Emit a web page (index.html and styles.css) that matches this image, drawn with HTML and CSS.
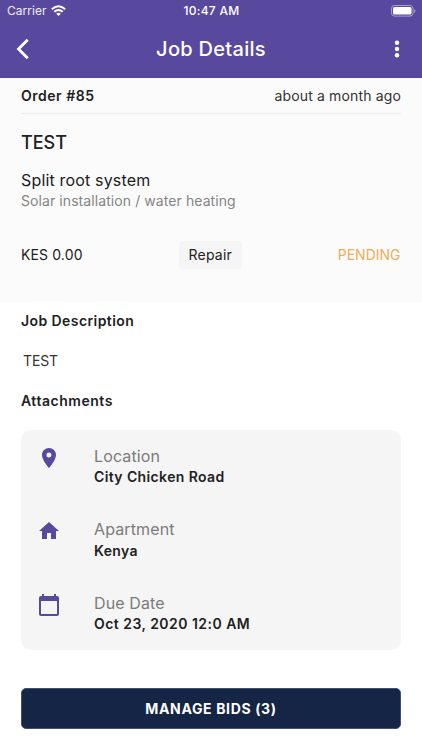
FILE: index.html
```html
<!DOCTYPE html>
<html lang="en">
<head>
<meta charset="utf-8">
<meta name="viewport" content="width=device-width, initial-scale=1">
<title>Job Details</title>
<link rel="stylesheet" href="styles.css">
</head>
<body>
<header class="top">
  <div class="status">
    <div class="carrier"><span>Carrier</span>
      <svg class="wifi" width="15" height="11" viewBox="0 0 15 11" fill="none" stroke="#fff" stroke-width="2"><path d="M.8 4.2Q7.5-1.8 14.2 4.2M3.3 6.8Q7.5 3.1 11.7 6.8"/><path d="M7.5 11 5.2 8.7Q7.5 6.9 9.8 8.7Z" fill="#fff" stroke="none"/></svg>
    </div>
    <div class="time">10:47 AM</div>
    <svg class="battery" width="25" height="12" viewBox="0 0 25 12"><rect x=".5" y=".5" width="21.5" height="10.6" rx="3" fill="none" stroke="#a89fd0"/><rect x="2" y="2" width="18.5" height="7.6" rx="1.5" fill="#fff"/><path d="M23.2 4v4q1.2-.6 1.2-2T23.2 4Z" fill="#a89fd0"/></svg>
  </div>
  <div class="appbar">
    <svg class="back" width="14" height="22" viewBox="0 0 14 22" fill="none" stroke="#fff" stroke-width="2.8"><path d="M11.7 1.8 2.5 11l9.2 9.2"/></svg>
    <h1 class="title">Job Details</h1>
    <svg class="more" width="6" height="18" viewBox="0 0 6 18" fill="#fff"><circle cx="3" cy="2.7" r="2.2"/><circle cx="3" cy="9" r="2.2"/><circle cx="3" cy="15.3" r="2.2"/></svg>
  </div>
</header>
<main>
  <section class="summary">
    <div class="order"><b class="order-id">Order #85</b><span class="ago">about a month ago</span></div>
    <h2 class="job">TEST</h2>
    <div class="service">Split root system</div>
    <div class="category">Solar installation / water heating</div>
    <div class="facts"><span class="price">KES 0.00</span><span class="chip"><span class="chip-text">Repair</span></span><span class="pending">PENDING</span></div>
  </section>
  <section class="details">
    <h3 class="heading description">Job Description</h3>
    <p class="body">TEST</p>
    <h3 class="heading attachments">Attachments</h3>
    <div class="card">
      <div class="item">
        <svg class="icon" width="24" height="24" viewBox="0 0 24 24"><path d="M12 2C8.13 2 5 5.13 5 9c0 5.25 7 13 7 13s7-7.75 7-13c0-3.87-3.13-7-7-7zm0 9.500a2.500 2.500 0 1 1 0-5 2.500 2.500 0 0 1 0 5z"/></svg>
        <div><div class="label location">Location</div><div class="value road">City Chicken Road</div></div>
      </div>
      <div class="item">
        <svg class="icon" width="24" height="24" viewBox="0 0 24 24"><path d="M10 20v-6h4v6h5v-8h3L12 3 2 12h3v8z"/></svg>
        <div><div class="label apartment">Apartment</div><div class="value kenya">Kenya</div></div>
      </div>
      <div class="item">
        <svg class="icon" width="24" height="24" viewBox="0 0 24 24"><path d="M20 3h-1V1h-2v2H7V1H5v2H4c-1.100 0-2 .9-2 2v16c0 1.100.9 2 2 2h16c1.100 0 2-.9 2-2V5c0-1.100-.9-2-2-2zm0 18H4V8h16v13z"/></svg>
        <div><div class="label due">Due Date</div><div class="value date">Oct 23, 2020 12:0 AM</div></div>
      </div>
    </div>
    <button class="manage"><span class="manage-text">MANAGE BIDS (3)</span></button>
  </section>
</main>
</body>
</html>
```
FILE: styles.css
```css
* { box-sizing: border-box; }
body { margin: 0; background: #fff; color: #212121; font: 14px/20px Inter, sans-serif; }
h1, h2, h3, p { margin: 0; }
svg { display: block; flex: none; }
span, b, .title, .job, .service, .category, .heading, .label, .value { white-space: nowrap; }
.top { height: 78px; background: #59499e; color: #fff; }
.status { height: 22px; display: grid; grid-template-columns: 1fr auto 1fr; padding: 0 6px 0 7px; align-items: center; font-size: 12px; }
.carrier { display: flex; align-items: center; gap: 4px; letter-spacing: .05px; color: #eeecf6; }
.wifi { margin-bottom: 1px; }
.time { font-size: 12px; font-weight: 500; letter-spacing: .3px; }
.battery { justify-self: end; margin-bottom: 1px; }
.appbar { height: 54px; padding: 0 22px 0 16px; display: grid; grid-template-columns: 1fr auto 1fr; align-items: center; }
.title { margin-left: 6px; font-size: 20px; line-height: 28px; font-weight: 500; letter-spacing: .29px; }
.more { justify-self: end; }
.summary { height: 224px; padding: 0 21px; background: #fbfbfb; }
.order { height: 36px; border-bottom: 1px solid #eee; display: flex; justify-content: space-between; align-items: center; padding-top: 1px; }
.order-id { font-weight: 600; letter-spacing: .52px; }
.ago { letter-spacing: .15px; color: #333; }
.job { margin-top: 15px; font-size: 18px; line-height: 28px; font-weight: 500; letter-spacing: 0; }
.service { margin-top: 11.500px; font-size: 16px; line-height: 22px; letter-spacing: .17px; }
.category { font-size: 14px; line-height: 20px; letter-spacing: .08px; color: #858585; }
.facts { margin-top: 30.500px; height: 28px; display: grid; grid-template-columns: 1fr auto 1fr; align-items: center; padding-right: .5px; }
.price { letter-spacing: .13px; }
.chip { margin-left: -1px; padding: 4px 10px; border-radius: 4px; background: #f5f5f5; }
.chip-text { letter-spacing: .2px; }
.pending { justify-self: end; color: #f0ad55; }
.details { padding: 9px 21px 0; }
.heading { font-size: 14px; line-height: 20px; font-weight: 600; letter-spacing: .42px; }
.attachments { letter-spacing: .53px; }
.body { margin: 20px 0 19.500px 2px; font-size: 14px; line-height: 20px; color: #333; letter-spacing: -.15px; }
.card { margin-top: 19.500px; height: 220px; border-radius: 10px; background: #f5f5f5; padding: 16px 16px; display: flex; flex-direction: column; gap: 31.800px; }
.item { height: 42px; display: flex; gap: 33px; }
.icon { fill: #59499e; }
.label { font-size: 16px; line-height: 21px; letter-spacing: .12px; color: #7b7b7b; }
.value { margin-top: -.7px; font-size: 14px; line-height: 21px; font-weight: 600; letter-spacing: .38px; }
.date { letter-spacing: .47px; }
.manage { display: block; width: 100%; height: 41px; margin: 38px 0 0; padding: 0; border: 1px solid #41506c; border-radius: 5px; background: #152546; color: #fff; font: 700 14px/20px Inter, sans-serif; letter-spacing: .64px; }
```
